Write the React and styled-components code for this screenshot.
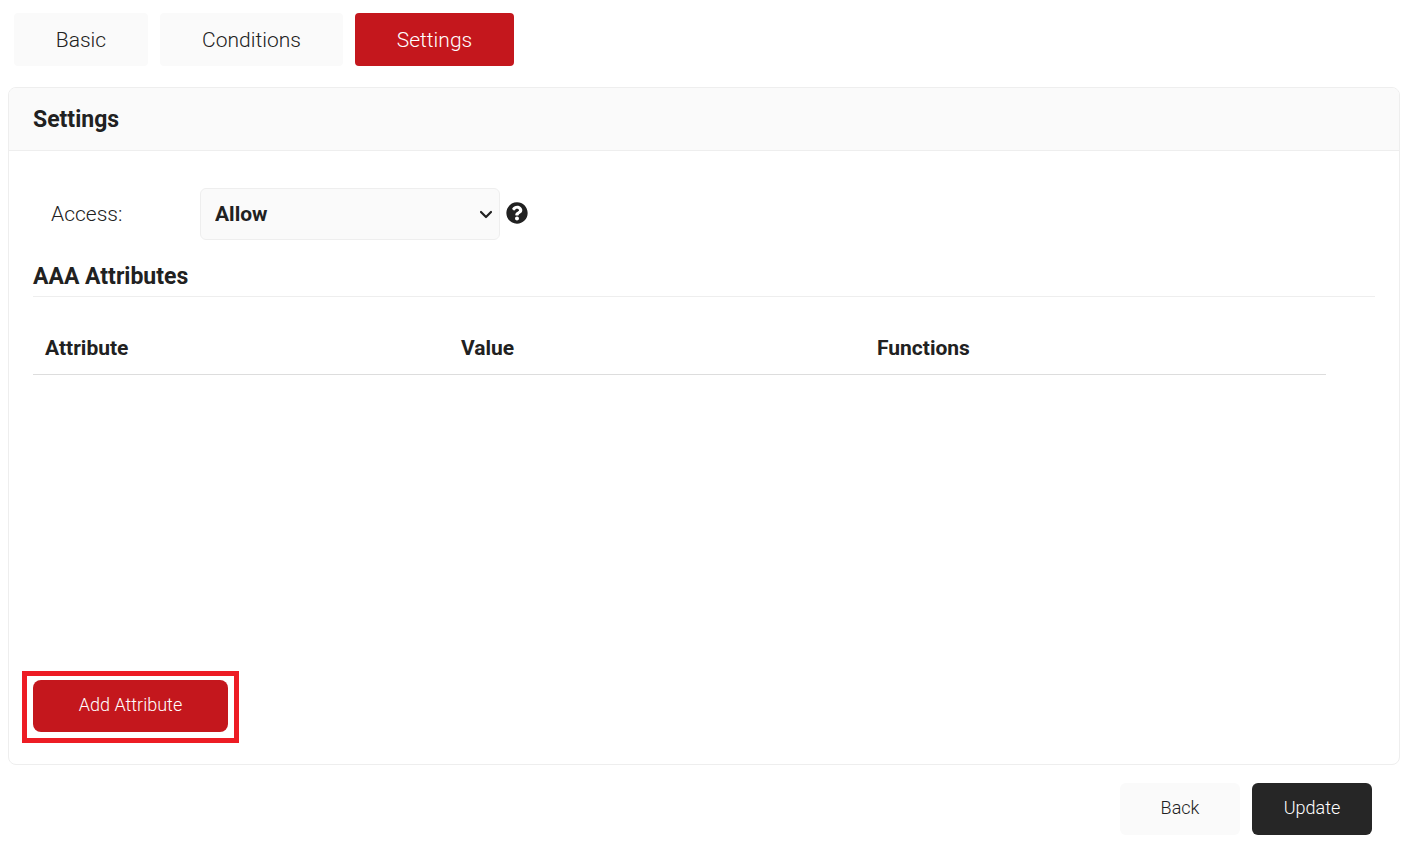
import React from "react";
import styled, { createGlobalStyle } from "styled-components";

const Global = createGlobalStyle`
  html, body { margin: 0; padding: 0; background: #fff; }
  body { font-family: Roboto, "Liberation Sans", sans-serif; color: #212121; }
  * { box-sizing: border-box; }
`;

const Page = styled.div`
  width: 1408px;
  height: 845px;
  padding: 13px 8px 0;
  overflow: hidden;
`;

const Tabs = styled.div`
  display: flex;
  gap: 12px;
  padding-left: 6px;
  margin-bottom: 21px;
`;

const Button = styled.button`
  height: 52px;
  width: ${(p) => p.$width}px;
  padding: 0 0 4px;
  border: none;
  border-radius: ${(p) => p.$radius || 6}px;
  font-family: inherit;
  font-size: 18px;
  font-weight: 300;
  color: ${(p) => (p.$variant === "light" ? "#212121" : "#fff")};
  background: ${(p) =>
    p.$variant === "dark" ? "#262626" : p.$variant === "red" ? "#c4171d" : "#fafafa"};
`;

const Tab = styled(Button)`
  height: 53px;
  padding: 0;
  border-radius: 4px;
  font-size: 21px;
`;

const Card = styled.section`
  height: 678px;
  border: 1px solid #eeeeee;
  border-radius: 8px;
  display: flex;
  flex-direction: column;
  overflow: hidden;
`;

const CardHeader = styled.header`
  height: 63px;
  flex: none;
  display: flex;
  align-items: center;
  padding: 1px 24px 0;
  background: #fafafa;
  border-bottom: 1px solid #eeeeee;
`;

const CardTitle = styled.h2`
  margin: 0;
  font-size: 23px;
  font-weight: 700;
  color: #212121;
`;

const CardBody = styled.div`
  flex: 1;
  display: flex;
  flex-direction: column;
  padding: 37px 24px 32px;
`;

const FormRow = styled.div`
  display: flex;
  align-items: center;
  height: 52px;
`;

const Label = styled.label`
  width: 167px;
  padding-left: 18px;
  font-size: 21px;
  font-weight: 300;
  color: #212121;
`;

const SelectWrap = styled.div`
  position: relative;
  width: 300px;
  height: 52px;
`;

const Select = styled.select`
  appearance: none;
  width: 100%;
  height: 100%;
  padding: 0 14px;
  background: #fafafa;
  border: 1px solid #eeeeee;
  border-radius: 6px;
  font-family: inherit;
  font-size: 21px;
  font-weight: 700;
  color: #212121;
`;

const Chevron = styled.svg`
  position: absolute;
  right: 6px;
  top: 18px;
  width: 16px;
  height: 16px;
  fill: none;
  stroke: #212121;
  stroke-width: 2.2;
  stroke-linecap: round;
  stroke-linejoin: round;
  pointer-events: none;
`;

const HelpIcon = styled.svg`
  width: 22px;
  height: 22px;
  margin: 0 0 3px 6px;
  flex: none;
  fill: #212121;
`;

const SectionTitle = styled.h3`
  margin: 22px 0 0;
  padding-bottom: 5px;
  height: 35px;
  font-size: 23px;
  line-height: 30px;
  font-weight: 700;
  color: #212121;
  border-bottom: 1px solid #eeeeee;
`;

const TableHead = styled.div`
  display: grid;
  grid-template-columns: 416px 416px 416px 1fr;
  align-items: center;
  width: 1293px;
  height: 78px;
  padding-top: 24px;
  border-bottom: 1px solid #dddddd;
`;

const HeadCell = styled.div`
  padding-left: 12px;
  font-size: 21px;
  font-weight: 700;
  color: #212121;
`;

const Spacer = styled.div`
  flex: 1;
`;

const Highlighted = styled.div`
  position: relative;
  align-self: flex-start;
  &::after {
    content: "";
    position: absolute;
    inset: -9px -11px -11px -11px;
    border: 5px solid #ed1c24;
    pointer-events: none;
  }
`;

const Footer = styled.div`
  display: flex;
  justify-content: flex-end;
  gap: 12px;
  padding: 18px 28px 0 0;
`;

export default function App() {
  return (
    <Page>
      <Global />
      <Tabs>
        <Tab $variant="light" $width={134}>Basic</Tab>
        <Tab $variant="light" $width={183}>Conditions</Tab>
        <Tab $variant="red" $width={159}>Settings</Tab>
      </Tabs>
      <Card>
        <CardHeader>
          <CardTitle>Settings</CardTitle>
        </CardHeader>
        <CardBody>
          <FormRow>
            <Label>Access:</Label>
            <SelectWrap>
              <Select defaultValue="Allow">
                <option>Allow</option>
                <option>Deny</option>
              </Select>
              <Chevron viewBox="0 0 16 16" aria-hidden="true">
                <path d="M3 6l5 5 5-5" />
              </Chevron>
            </SelectWrap>
            <HelpIcon viewBox="0 0 512 512" aria-hidden="true">
              <path d="M504 256c0 136.997-111.043 248-248 248S8 392.997 8 256C8 119.083 119.043 8 256 8s248 111.083 248 248zM262.655 90c-54.497 0-89.255 22.957-116.549 63.758-3.536 5.286-2.353 12.415 2.715 16.258l34.699 26.31c5.205 3.947 12.621 3.008 16.665-2.122 17.864-22.658 30.113-35.797 57.303-35.797 20.429 0 45.698 13.148 45.698 32.958 0 14.976-12.363 22.667-32.534 33.976C247.128 238.528 216 254.941 216 296v4c0 6.627 5.373 12 12 12h56c6.627 0 12-5.373 12-12v-1.333c0-28.462 83.186-29.647 83.186-106.667 0-58.002-60.165-102-116.531-102zM256 338c-25.365 0-46 20.635-46 46 0 25.364 20.635 46 46 46s46-20.636 46-46c0-25.365-20.635-46-46-46z" />
            </HelpIcon>
          </FormRow>
          <SectionTitle>AAA Attributes</SectionTitle>
          <TableHead>
            <HeadCell>Attribute</HeadCell>
            <HeadCell>Value</HeadCell>
            <HeadCell>Functions</HeadCell>
            <HeadCell />
          </TableHead>
          <Spacer />
          <Highlighted>
            <Button $variant="red" $width={195} $radius={8}>
              Add Attribute
            </Button>
          </Highlighted>
        </CardBody>
      </Card>
      <Footer>
        <Button $variant="light" $width={120}>
          Back
        </Button>
        <Button $variant="dark" $width={120}>
          Update
        </Button>
      </Footer>
    </Page>
  );
}
